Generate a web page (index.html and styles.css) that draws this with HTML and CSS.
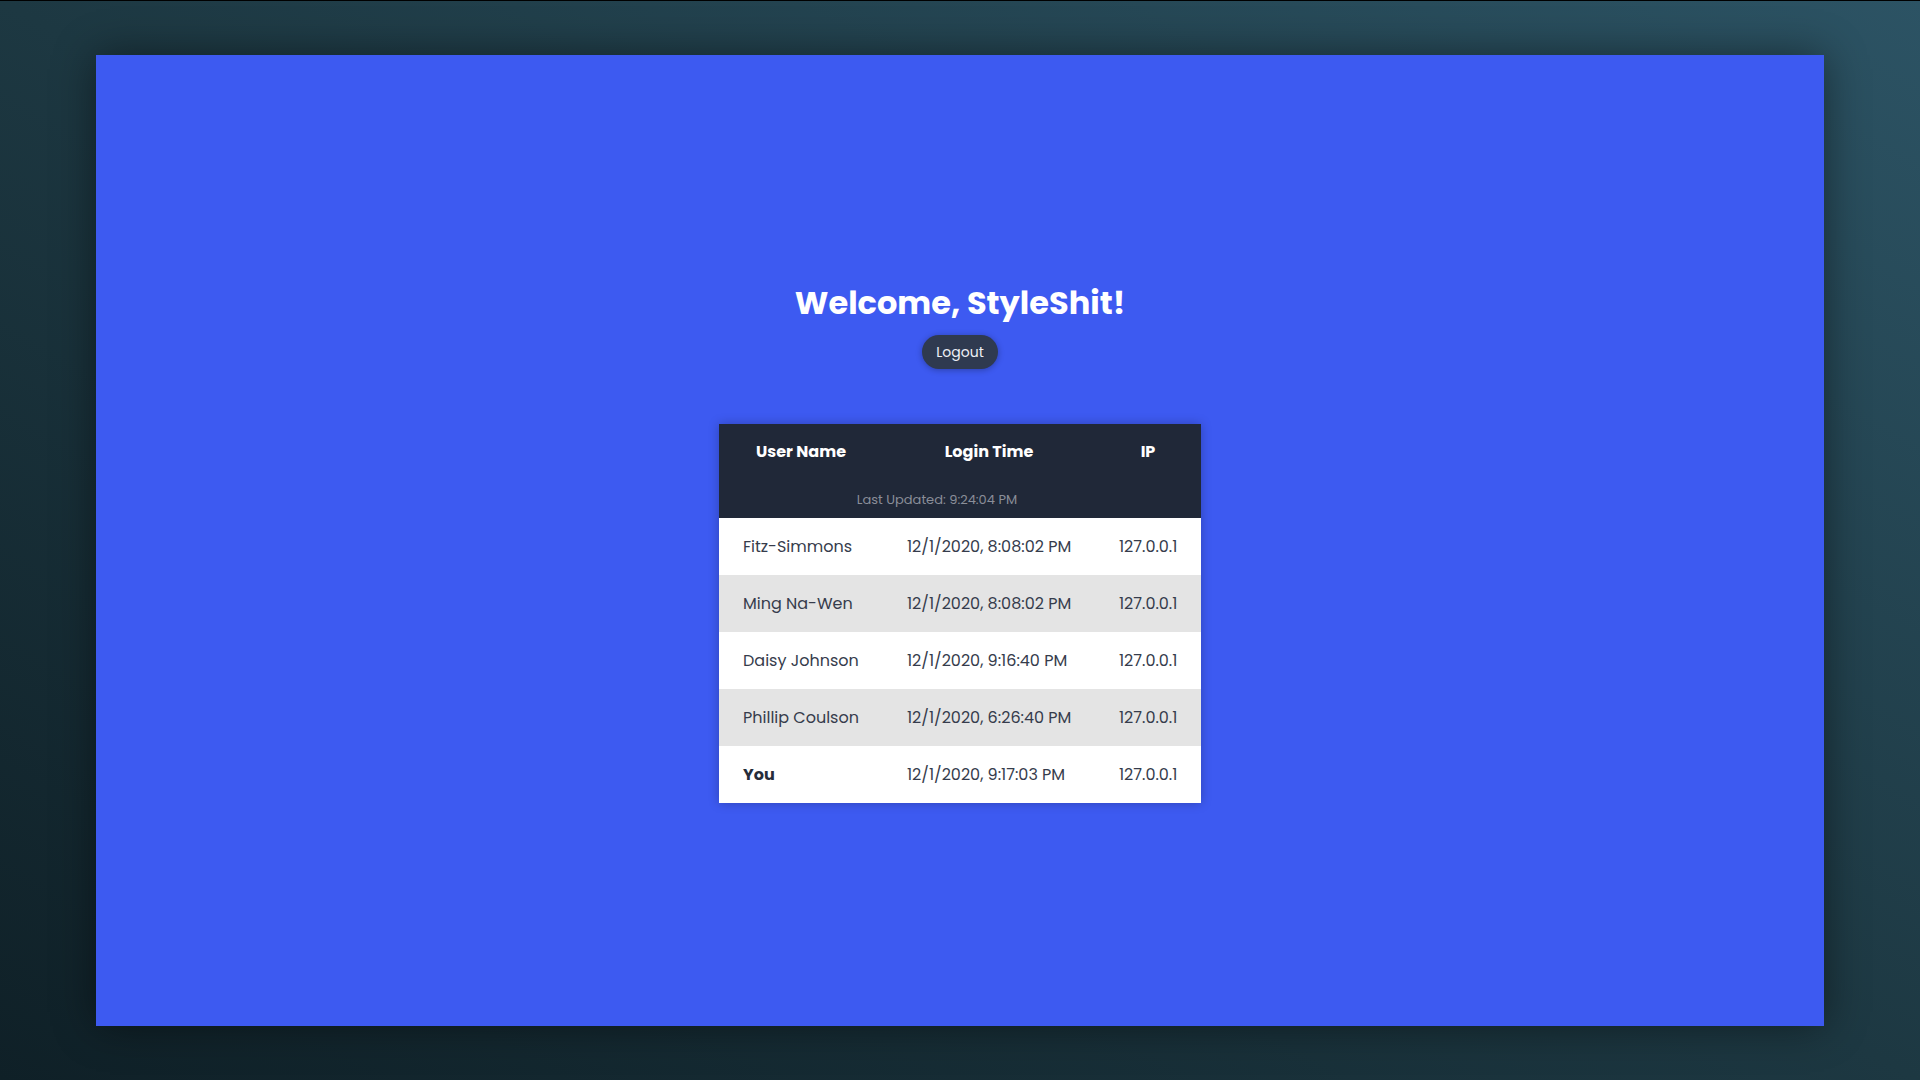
FILE: index.html
```html
<!DOCTYPE html>
<html lang="en">
<head>
<meta charset="utf-8">
<title>Welcome</title>
<link rel="stylesheet" href="styles.css">
</head>
<body>
<main class="panel">
  <h1 class="welcome">Welcome, StyleShit!</h1>
  <button class="logout">Logout</button>
  <table class="logins">
    <colgroup>
      <col class="c-user">
      <col class="c-time">
      <col class="c-ip">
    </colgroup>
    <thead>
      <tr class="head-row">
        <th>User Name</th>
        <th>Login Time</th>
        <th>IP</th>
      </tr>
      <tr class="updated-row">
        <th colspan="3">Last Updated: 9:24:04 PM</th>
      </tr>
    </thead>
    <tbody>
      <tr><td>Fitz-Simmons</td><td>12/1/2020, 8:08:02 PM</td><td>127.0.0.1</td></tr>
      <tr><td>Ming Na-Wen</td><td>12/1/2020, 8:08:02 PM</td><td>127.0.0.1</td></tr>
      <tr><td>Daisy Johnson</td><td>12/1/2020, 9:16:40 PM</td><td>127.0.0.1</td></tr>
      <tr><td>Phillip Coulson</td><td>12/1/2020, 6:26:40 PM</td><td>127.0.0.1</td></tr>
      <tr class="me"><td>You</td><td>12/1/2020, 9:17:03 PM</td><td>127.0.0.1</td></tr>
    </tbody>
  </table>
</main>
</body>
</html>
```
FILE: styles.css
```css
html, body {
  margin: 0;
  padding: 0;
  height: 100%;
}
body {
  box-sizing: border-box;
  border-top: 1px solid #000;
  background: linear-gradient(to top right, #0f2027 0%, #1d3842 50%, #2c5364 100%);
  display: flex;
  align-items: center;
  justify-content: center;
  font-family: "Poppins", "Inter", "Open Sans", sans-serif;
}
.panel {
  width: 1728px;
  height: 971px;
  margin-top: -1px;
  background: #3d5af1;
  box-shadow: 0 0 40px rgba(0, 0, 0, 0.45);
  display: flex;
  flex-direction: column;
  align-items: center;
  justify-content: flex-start;
  padding-top: 229px;
  box-sizing: border-box;
}
.welcome {
  margin: 0;
  color: #fff;
  font-size: 32px;
  font-weight: 700;
  line-height: 38px;
  letter-spacing: 0;
}
.logout {
  margin-top: 13px;
  width: 76px;
  height: 34px;
  border: none;
  border-radius: 17px;
  background: #2f3a50;
  color: #eef0f6;
  font-family: inherit;
  font-size: 14px;
  line-height: 34px;
  box-shadow: 0 1px 6px rgba(0, 0, 0, 0.3);
  padding: 0;
}
.logins {
  margin-top: 55px;
  border-collapse: collapse;
  table-layout: fixed;
  width: 482px;
  box-shadow: 0 0 10px rgba(0, 0, 0, 0.25);
}
.c-user { width: 164px; }
.c-time { width: 212px; }
.c-ip { width: 106px; }
.logins thead {
  background: #202838;
}
.head-row th {
  height: 56px;
  padding: 0;
  color: #fff;
  font-size: 16px;
  font-weight: 700;
  line-height: 24px;
  text-align: center;
  vertical-align: middle;
}
.updated-row th {
  height: 36px;
  padding: 2px 46px 0 0;
  color: #8a8e98;
  font-size: 13px;
  font-weight: 400;
  line-height: 20px;
  text-align: center;
  vertical-align: middle;
}
.logins td {
  height: 56px;
  padding: 1px 0 0 24px;
  color: #363c4c;
  font-size: 16px;
  line-height: 24px;
  white-space: nowrap;
  vertical-align: middle;
}
.logins tbody tr {
  background: #fff;
}
.logins tbody tr:nth-child(even) {
  background: #e4e4e4;
}
.me td:first-child {
  font-weight: 700;
  color: #262c3a;
}
```
